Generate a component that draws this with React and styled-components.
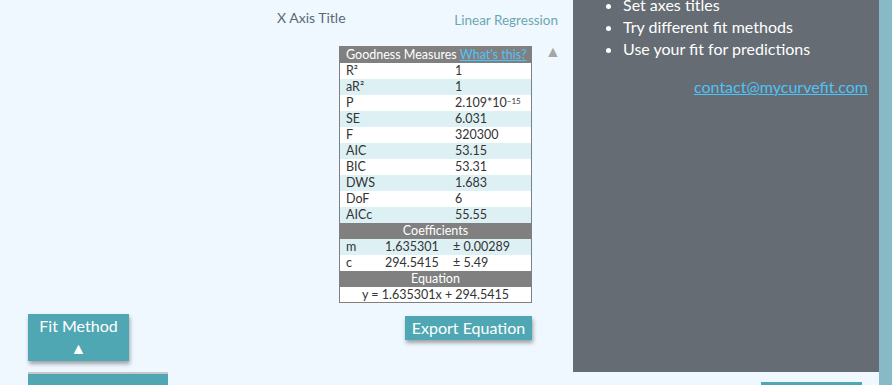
import React from "react";
import styled, { createGlobalStyle } from "styled-components";

const Global = createGlobalStyle`
  html, body { margin: 0; padding: 0; background: #f0f8ff; overflow: hidden; }
  body { font-family: Lato, "Open Sans", sans-serif; }
`;

const Page = styled.div`
  display: grid;
  grid-template-columns: 573px 306px 13px;
  width: 892px;
  height: 385px;
  overflow: hidden;
`;

const LeftArea = styled.div`
  display: flex;
  flex-direction: column;
`;

const TitleRow = styled.div`
  display: flex;
  align-items: flex-start;
  height: 46px;
  padding-left: 277px;
  padding-right: 15px;
`;

const AxisTitle = styled.div`
  color: #5a6878;
  font-size: 14px;
  margin-top: 9px;
`;

const ModelName = styled.div`
  margin-left: auto;
  color: #6aa7b2;
  font-size: 13.5px;
  margin-top: 12px;
`;

const TableRow = styled.div`
  display: flex;
  align-items: flex-start;
  padding-left: 339px;
`;

const Table = styled.div`
  width: 191px;
  border: 1px solid #808080;
  font-size: 12.5px;
  color: #333;
  background: #fff;
`;

const Head = styled.div`
  height: 16px;
  line-height: 16px;
  background: #808080;
  color: #fff;
  text-align: ${(p) => (p.$left ? "left" : "center")};
  padding-left: ${(p) => (p.$left ? "6px" : "0")};
  white-space: nowrap;
  a { color: #4fc3f7; text-decoration: underline; }
`;

const Row = styled.div`
  display: grid;
  grid-template-columns: ${(p) => p.$cols || "109px 1fr"};
  height: 16px;
  line-height: 16px;
  padding-left: 6px;
  background: ${(p) => (p.$alt ? "#ddf0f3" : "#fff")};
  white-space: nowrap;
  sup { font-size: 8px; vertical-align: top; line-height: 12px; }
`;

const EqRow = styled.div`
  height: 15px;
  line-height: 15px;
  text-align: center;
  background: #fff;
`;

const Collapse = styled.div`
  color: #a6a6a6;
  font-size: 16px;
  margin-left: 13px;
  margin-top: -5px;
`;

const ButtonRow = styled.div`
  display: flex;
  align-items: flex-start;
  margin-top: 11px;
  padding-left: 28px;
`;

const Button = styled.div`
  background: #4fa7b3;
  color: #fff;
  box-shadow: 1px 3px 4px rgba(0, 0, 0, 0.35);
  text-align: center;
  font-size: 16px;
`;

const FitButton = styled(Button)`
  width: 101px;
  height: 47px;
  line-height: 22px;
  padding-top: 1px;
  box-sizing: border-box;
`;

const ExportButton = styled(Button)`
  margin-left: 276px;
  margin-top: 2px;
  width: 127px;
  height: 24px;
  line-height: 23px;
`;

const BottomBar = styled.div`
  margin-top: 11px;
  margin-left: 28px;
  width: 140px;
  height: 20px;
  border-top: 2px solid #c8c8c8;
  background: #4fa7b3;
`;

const RightCol = styled.div`
  display: flex;
  flex-direction: column;
`;

const Panel = styled.div`
  background: #656c73;
  height: 372px;
  color: #fff;
  padding-right: 11px;
  box-sizing: border-box;
`;

const List = styled.ul`
  margin: -6px 0 0 0;
  padding-left: 50px;
  font-size: 16px;
  line-height: 22px;
`;

const Contact = styled.a`
  display: block;
  text-align: right;
  margin-top: 17px;
  color: #4fc3f7;
  font-size: 16px;
  text-decoration: underline;
`;

const UnderBar = styled.div`
  margin-top: 10px;
  margin-left: 188px;
  width: 101px;
  height: 20px;
  background: #4fa7b3;
`;

const Strip = styled.div`
  background: #87bac5;
`;

const measures = [
  ["R²", "1"],
  ["aR²", "1"],
  ["P", <>2.109*10<sup>−15</sup></>],
  ["SE", "6.031"],
  ["F", "320300"],
  ["AIC", "53.15"],
  ["BIC", "53.31"],
  ["DWS", "1.683"],
  ["DoF", "6"],
  ["AICc", "55.55"],
];

export default function App() {
  return (
    <>
      <Global />
      <Page>
        <LeftArea>
          <TitleRow>
            <AxisTitle>X Axis Title</AxisTitle>
            <ModelName>Linear Regression</ModelName>
          </TitleRow>
          <TableRow>
            <Table>
              <Head $left>
                Goodness Measures <a href="#">What's this?</a>
              </Head>
              {measures.map(([k, v], i) => (
                <Row key={k} $alt={i % 2 === 1}>
                  <span>{k}</span>
                  <span>{v}</span>
                </Row>
              ))}
              <Head>Coefficients</Head>
              <Row $alt $cols="39px 68px 1fr">
                <span>m</span>
                <span>1.635301</span>
                <span>± 0.00289</span>
              </Row>
              <Row $cols="39px 68px 1fr">
                <span>c</span>
                <span>294.5415</span>
                <span>± 5.49</span>
              </Row>
              <Head>Equation</Head>
              <EqRow>y = 1.635301x + 294.5415</EqRow>
            </Table>
            <Collapse>▲</Collapse>
          </TableRow>
          <ButtonRow>
            <FitButton>
              Fit Method
              <br />▲
            </FitButton>
            <ExportButton>Export Equation</ExportButton>
          </ButtonRow>
          <BottomBar />
        </LeftArea>
        <RightCol>
          <Panel>
            <List>
              <li>Set axes titles</li>
              <li>Try different fit methods</li>
              <li>Use your fit for predictions</li>
            </List>
            <Contact href="#">contact@mycurvefit.com</Contact>
          </Panel>
          <UnderBar />
        </RightCol>
        <Strip />
      </Page>
    </>
  );
}
